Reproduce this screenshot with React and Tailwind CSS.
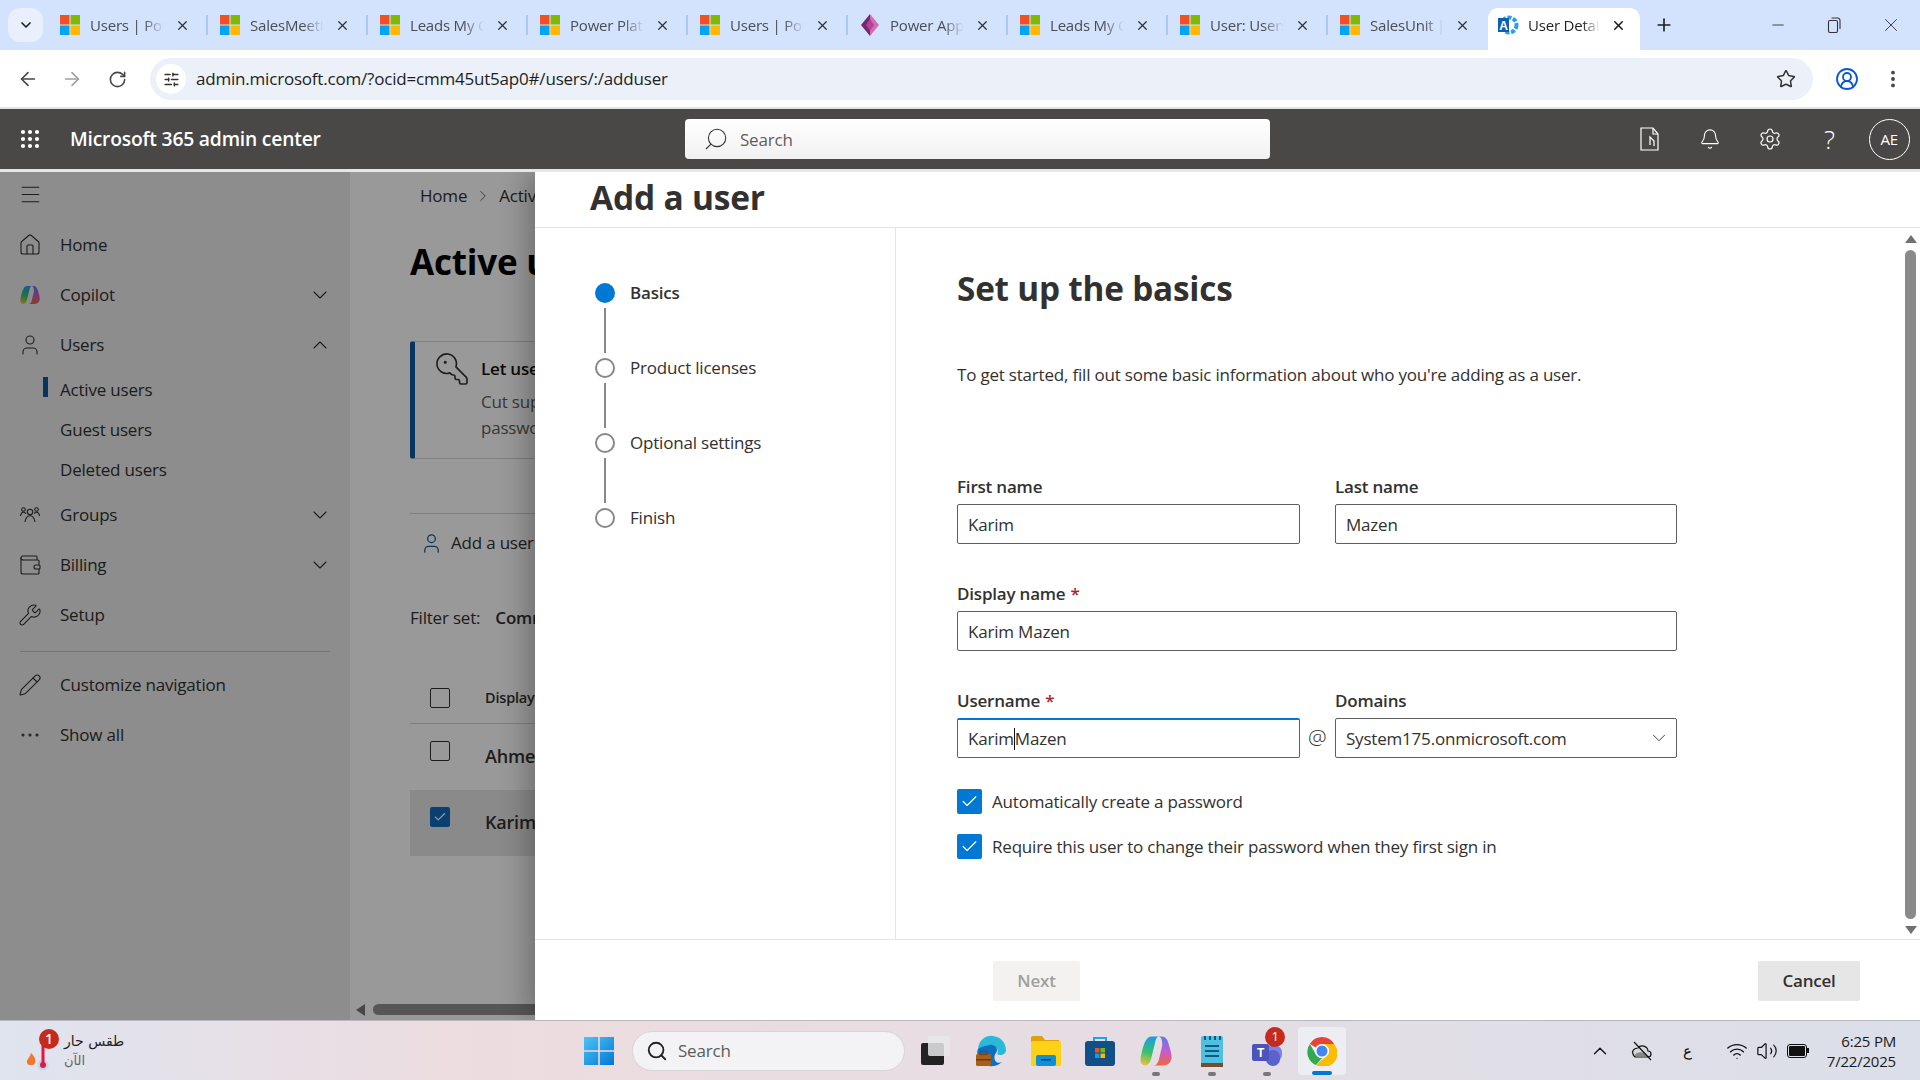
import React from 'react';
import { ChevronDown, ChevronUp, ArrowLeft, ArrowRight, RotateCw, Star, CircleUserRound, EllipsisVertical, Plus, X, Minus, Search, Bell, Settings, House, User, Wallet, Wrench, Pencil, Ellipsis, Check, Wifi, Volume2, SlidersHorizontal, ChevronRight, Menu, Grip, KeyRound } from 'lucide-react';

const MsLogo = () => (
  <svg width="20" height="20" viewBox="0 0 20 20" className="shrink-0">
    <rect x="0" y="0" width="9.5" height="9.5" fill="#f25022" />
    <rect x="10.5" y="0" width="9.5" height="9.5" fill="#7fba00" />
    <rect x="0" y="10.5" width="9.5" height="9.5" fill="#00a4ef" />
    <rect x="10.5" y="10.5" width="9.5" height="9.5" fill="#ffb900" />
  </svg>
);
const PowerApps = () => (
  <svg width="20" height="24" viewBox="0 0 20 24" className="shrink-0">
    <path d="M10 1 L19 12 L10 23 Z" fill="#d56cb1" />
    <path d="M10 1 L1 12 L10 23 Z" fill="#742774" />
    <path d="M10 6 L14 12 L10 18 L6 12 Z" fill="#b4419a" />
  </svg>
);
const AzureGear = () => (
  <svg width="22" height="22" viewBox="0 0 22 22" className="shrink-0">
    <circle cx="12" cy="11" r="7.5" fill="none" stroke="#2aa0e6" strokeWidth="4" strokeDasharray="4 1.6" />
    <path d="M1 4 H12 V18 H1 Z" fill="#0f5fb0" />
    <text x="6.5" y="15.5" fontSize="12" fontWeight="700" fill="#fff" textAnchor="middle" fontFamily="Liberation Sans">A</text>
  </svg>
);

const tabs = [
  ['Users | Power', 'ms'], ['SalesMeeting', 'ms'], ['Leads My Op', 'ms'], ['Power Platfo', 'ms'], ['Users | Power', 'ms'],
  ['Power Apps', 'pa'], ['Leads My Op', 'ms'], ['User: Users', 'ms'], ['SalesUnit | D', 'ms'],
];

function Tab({ title, icon, last }) {
  return (
    <div className="relative flex h-[42px] w-[160px] shrink-0 items-center pb-[8px] pl-[12px]">
      {icon === 'ms' ? <MsLogo /> : <PowerApps />}
      <span className="ml-[10px] w-[74px] overflow-hidden whitespace-nowrap text-[15px] text-[#4a4d52] [mask-image:linear-gradient(to_right,#000_72%,transparent)]">{title}</span>
      <X size={15} strokeWidth={2} className="ml-[11px] text-[#2f3237]" />
      <div className={last ? 'hidden' : 'absolute right-0 top-[7px] h-[20px] w-[2px] bg-[#a8c7fa]'} />
    </div>
  );
}

function TabStrip() {
  return (
    <div className="flex h-[50px] shrink-0 items-end bg-[#d3e3fd]">
      <div className="mb-[8px] ml-[8px] mr-[5px] flex h-[34px] w-[35px] shrink-0 items-center justify-center rounded-[12px] bg-[#e9f0fc]">
        <ChevronDown size={16} strokeWidth={2.5} className="text-[#1f1f1f]" />
      </div>
      {tabs.map((t, i) => <Tab key={i} title={t[0]} icon={t[1]} last={i === 8} />)}
      <div className="flex h-[42px] w-[152px] shrink-0 items-center rounded-t-[10px] bg-white pb-[8px] pl-[9px]">
        <AzureGear />
        <span className="ml-[9px] w-[72px] overflow-hidden whitespace-nowrap text-[15px] text-[#1f1f1f] [mask-image:linear-gradient(to_right,#000_75%,transparent)]">User Details</span>
        <X size={15} strokeWidth={2.5} className="ml-[11px] text-[#1f1f1f]" />
      </div>
      <div className="flex h-[42px] w-[48px] shrink-0 items-center justify-center pb-[8px]">
        <Plus size={20} strokeWidth={2} className="text-[#1f1f1f]" />
      </div>
      <div className="ml-auto flex h-[50px] items-center text-[#333]">
        <div className="flex w-[56px] justify-center"><Minus size={18} strokeWidth={1.2} /></div>
        <div className="flex w-[56px] justify-center">
          <svg width="14" height="16" viewBox="0 0 14 16" fill="none" stroke="#333" strokeWidth="1.1"><rect x="1.5" y="3.5" width="9" height="12" rx="1.5" /><path d="M4.5 1 H10.5 A2.5 2.5 0 0 1 13 3.5 V12" /></svg>
        </div>
        <div className="flex w-[58px] justify-center"><X size={22} strokeWidth={1} /></div>
      </div>
    </div>
  );
}

function Toolbar() {
  return (
    <div className="flex h-[57px] shrink-0 items-center bg-white pt-[1px]">
      <div className="ml-[17px] flex w-[133px] items-center text-[#474747]">
        <ArrowLeft size={22} strokeWidth={1.8} />
        <ArrowRight size={22} strokeWidth={1.8} className="ml-[22px] text-[#a0a0a0]" />
        <RotateCw size={19} strokeWidth={2} className="ml-[25px]" />
      </div>
      <div className="flex h-[42px] w-[1663px] shrink-0 items-center rounded-full bg-[#ebf0f9] pl-[6px]">
        <div className="flex h-[30px] w-[30px] items-center justify-center rounded-full bg-white">
          <SlidersHorizontal size={17} strokeWidth={2} className="text-[#333]" />
        </div>
        <span className="ml-[10px] text-[17px] text-[#1f1f1f]">admin.microsoft.com/?ocid=cmm45ut5ap0#/users/:/adduser</span>
        <Star size={20} strokeWidth={1.8} className="ml-auto mr-[17px] text-[#333]" />
      </div>
      <CircleUserRound size={24} strokeWidth={1.8} className="ml-[22px] text-[#0b57d0]" />
      <EllipsisVertical size={22} strokeWidth={2.2} className="ml-[23px] text-[#474747]" />
    </div>
  );
}

function AdminHeader() {
  return (
    <>
      <div className="h-[2px] shrink-0 bg-[#e3e3e3]" />
      <div className="flex h-[60px] shrink-0 items-center bg-[#494846] text-white">
        <Grip size={24} strokeWidth={2.2} className="ml-[18px]" />
        <span className="ml-[28px] w-[615px] pt-[1px] text-[19.3px] font-semibold">Microsoft 365 admin center</span>
        <div className="flex h-[40px] w-[585px] items-center rounded-[4px] bg-gradient-to-b from-white to-[#f1f1f1] pl-[18px]">
          <Search size={26} strokeWidth={1} className="-scale-x-100 text-[#333]" />
          <span className="ml-[11px] pt-[1px] text-[17px] text-[#605e5c]">Search</span>
        </div>
        <svg width="22" height="26" viewBox="0 0 22 26" fill="none" stroke="#fff" strokeWidth="1.2" className="ml-[369px]">
          <path d="M2 2 H14 L19 8 V24 H2 Z" /><path d="M14 2 V8 H19" /><path d="M11 19 V11 L15 15 V20" />
        </svg>
        <Bell size={22} strokeWidth={1.2} className="ml-[38px]" />
        <Settings size={24} strokeWidth={1.2} className="ml-[37px]" />
        <span className="ml-[42px] text-[26px] font-light leading-none">?</span>
        <div className="ml-[34px] flex h-[41px] w-[41px] items-center justify-center rounded-full border border-white text-[15px]">AE</div>
      </div>
      <div className="h-[3px] shrink-0 bg-[#e6e6e6]" />
    </>
  );
}

const Copilot = ({ s = 20, id = 'n' }) => (
  <svg width={s} height={s} viewBox="0 0 20 20" className="shrink-0">
    <defs>
      <linearGradient id={'cpa' + id} x1="0.5" y1="0" x2="0.3" y2="1"><stop offset="0" stopColor="#1b9de2" /><stop offset="0.55" stopColor="#37c26c" /><stop offset="1" stopColor="#e8c13a" /></linearGradient>
      <linearGradient id={'cpb' + id} x1="0.5" y1="0" x2="0.5" y2="1"><stop offset="0" stopColor="#5a7be8" /><stop offset="0.5" stopColor="#c45bd0" /><stop offset="1" stopColor="#f0683b" /></linearGradient>
    </defs>
    <path d="M7 1 H12 C10.5 1 10 2.5 9.6 4 L7.4 13 C6.8 16.5 5.5 19 3 19 C0.5 19 -0.3 16 0.8 12 C2 7 3.5 1 7 1Z" fill={`url(#cpa${id})`} />
    <path d="M11.5 1 H13.5 C16 1 17.3 3 18 6 C19.5 11 20.5 14 19 16.5 C18 18.5 16 19 13 19 H8.5 C10.5 19 11.5 17 12 14.5 L13.8 7 C14.2 4 13.5 1 11.5 1Z" fill={`url(#cpb${id})`} />
  </svg>
);

function NavRow({ icon, label, chevron }) {
  return (
    <div className="flex h-[50px] shrink-0 items-center pl-[20px] pr-[18px] text-[17px] text-[#323130]">
      <span className="flex w-[20px] justify-center">{icon}</span>
      <span className="ml-[20px]">{label}</span>
      {chevron === 'down' && <ChevronDown size={24} strokeWidth={1.1} className="ml-auto" />}
      {chevron === 'up' && <ChevronUp size={24} strokeWidth={1.1} className="ml-auto" />}
    </div>
  );
}
function SubRow({ label, active }) {
  return (
    <div className="relative flex h-[40px] shrink-0 items-center pl-[60px] text-[17px] text-[#323130]">
      {active && <div className="absolute left-[43px] top-[7px] h-[20px] w-[5px] bg-[#0b5a9c]" />}
      {label}
    </div>
  );
}

const GroupsIcon = () => (
  <svg width="20" height="20" viewBox="0 0 20 20" fill="none" stroke="#323130" strokeWidth="1.1" className="shrink-0">
    <circle cx="10" cy="7" r="2.7" /><path d="M5 17 Q6 11 10 10.5 Q14 11 15 17" /><circle cx="3.5" cy="4.5" r="1.8" /><circle cx="16.5" cy="4.5" r="1.8" /><path d="M0.5 11 Q1 7.5 3.5 7 L6 8.5" /><path d="M19.5 11 Q19 7.5 16.5 7 L14 8.5" />
  </svg>
);

function SideNav() {
  const ic = { size: 24, strokeWidth: 1.1, className: 'shrink-0' };
  return (
    <nav className="flex w-[350px] shrink-0 flex-col bg-[#ebebeb]">
      <div className="h-[48px] shrink-0 pl-[18px] pt-[10px] text-[#323130]"><Menu size={25} strokeWidth={1} /></div>
      <NavRow icon={<House {...ic} />} label="Home" />
      <NavRow icon={<Copilot />} label="Copilot" chevron="down" />
      <NavRow icon={<User {...ic} />} label="Users" chevron="up" />
      <SubRow label="Active users" active />
      <SubRow label="Guest users" />
      <SubRow label="Deleted users" />
      <NavRow icon={<GroupsIcon />} label="Groups" chevron="down" />
      <NavRow icon={<Wallet {...ic} />} label="Billing" chevron="down" />
      <NavRow icon={<Wrench {...ic} />} label="Setup" />
      <div className="ml-[20px] mr-[20px] mt-[11px] h-px bg-[#c4c4c4] mb-[8px]" />
      <NavRow icon={<Pencil {...ic} />} label="Customize navigation" />
      <NavRow icon={<Ellipsis {...ic} />} label="Show all" />
    </nav>
  );
}

function PageBox({ checked }) {
  return checked ? (
    <div className="flex h-[20px] w-[20px] shrink-0 items-center justify-center rounded-[2px] bg-[#0f6cbd] text-white"><Check size={14} strokeWidth={2} /></div>
  ) : <div className="h-[20px] w-[20px] shrink-0 rounded-[2px] border border-[#323130]" />;
}

function PageBehind() {
  return (
    <main className="flex w-[185px] shrink-0 flex-col overflow-hidden bg-white">
      <div className="flex h-[48px] shrink-0 items-center whitespace-nowrap pl-[70px] text-[17px] text-[#323130]">
        Home <ChevronRight size={18} strokeWidth={1} className="mx-[7px] shrink-0" /> Active users
      </div>
      <h1 className="ml-[60px] mt-[15px] h-[54px] whitespace-nowrap text-[35px] font-bold leading-[54px] text-black">Active users</h1>
      <div className="ml-[60px] mt-[52px] flex h-[118px] w-[800px] shrink-0 rounded-[3px] border border-l-[5px] border-[#d5d5d5] border-l-[#0b5a9c]">
        <KeyRound size={36} strokeWidth={1.1} className="ml-[19px] mt-[9px] -scale-x-100 text-[#323130]" />
        <div className="ml-[11px] mt-[14px] text-[17px] leading-[26px]">
          <div className="font-semibold text-[#111]">Let users reset their passwords</div>
          <div className="mt-[7px] text-[#605e5c]">Cut support costs and let users reset their</div>
          <div className="text-[#605e5c]">passwords</div>
        </div>
      </div>
      <div className="ml-[60px] mt-[54px] h-px w-[800px] shrink-0 bg-[#d5d5d5]" />
      <div className="ml-[70px] flex h-[58px] shrink-0 items-center whitespace-nowrap text-[17px] text-[#323130]">
        <User size={23} strokeWidth={1.3} className="shrink-0 text-[#0b5a9c]" />
        <span className="ml-[8px]">Add a user</span>
      </div>
      <div className="ml-[60px] mt-[27px] flex h-[38px] shrink-0 items-center whitespace-nowrap text-[17px] text-[#323130]">
        Filter set:<span className="ml-[15px] font-semibold">Community</span>
      </div>
      <div className="ml-[60px] mt-[39px] flex h-[48px] w-[800px] shrink-0 items-center whitespace-nowrap border-b border-[#d5d5d5] pb-[4px] pl-[20px]">
        <PageBox /><span className="ml-[35px] text-[14.5px] font-semibold text-[#323130]">Display name</span>
      </div>
      <div className="ml-[60px] flex h-[66px] w-[800px] shrink-0 whitespace-nowrap pl-[20px] pt-[17px]">
        <PageBox /><span className="ml-[35px] mt-[2px] text-[18px] font-semibold text-[#323130]">Ahmed</span>
      </div>
      <div className="ml-[60px] flex h-[66px] w-[800px] shrink-0 whitespace-nowrap bg-[#e6e6e6] pl-[20px] pt-[17px]">
        <PageBox checked /><span className="ml-[35px] mt-[2px] text-[18px] font-semibold text-[#323130]">Karim</span>
      </div>
      <div className="ml-[6px] mt-auto mb-[5px] flex h-[11px] shrink-0 items-center">
        <div className="h-0 w-0 border-y-[6px] border-r-[9px] border-y-transparent border-r-[#777]" />
        <div className="ml-[8px] h-[11px] w-[400px] shrink-0 rounded-full bg-[#8f8f8f]" />
      </div>
    </main>
  );
}

function Field({ label, req, children }) {
  return (
    <div>
      <div className="flex h-[30px] items-start text-[17px] font-semibold leading-[26px] text-[#323130]">
        {label}{req && <span className="ml-[5px] text-[#a4262c]">*</span>}
      </div>
      {children}
    </div>
  );
}
function TextBox({ value, focused }) {
  return (
    <div className={focused
      ? 'flex h-[40px] items-center rounded-[2px] border border-t-2 border-[#0078d4] pl-[10px] text-[17px] text-[#323130]'
      : 'flex h-[40px] items-center rounded-[2px] border border-[#605e5c] pl-[10px] pt-[2px] text-[17px] text-[#323130]'}>
      {value}
    </div>
  );
}
function CheckRow({ label }) {
  return (
    <div className="flex h-[25px] items-center">
      <div className="flex h-[25px] w-[25px] shrink-0 items-center justify-center rounded-[2px] bg-[#0078d4] text-white"><Check size={19} strokeWidth={1.5} /></div>
      <span className="ml-[10px] text-[17px] text-[#323130]">{label}</span>
    </div>
  );
}

function Step({ label, active, last }) {
  return (
    <div className="flex h-[75px] shrink-0">
      <div className="flex w-[20px] flex-col items-center">
        {active
          ? <div className="h-[20px] w-[20px] shrink-0 rounded-full bg-[#0078d4]" />
          : <div className="h-[20px] w-[20px] shrink-0 rounded-full border-2 border-[#8a8886]" />}
        {!last && <div className="mt-[5px] h-[45px] w-[2px] bg-[#8a8886]" />}
      </div>
      <span className={active ? 'ml-[15px] text-[17px] font-semibold leading-[19px] text-[#323130]' : 'ml-[15px] text-[17px] leading-[19px] text-[#323130]'}>{label}</span>
    </div>
  );
}

function Drawer() {
  return (
    <section className="absolute bottom-0 left-[535px] right-0 top-0 flex flex-col bg-white shadow-[-6px_0_28px_rgba(0,0,0,0.3)]">
      <header className="flex h-[56px] shrink-0 items-start border-b border-[#e5e5e5] pl-[55px]">
        <h2 className="text-[33.5px] font-bold leading-[50px] text-[#323130]">Add a user</h2>
      </header>
      <div className="flex min-h-0 flex-1">
        <div className="w-[361px] shrink-0 border-r border-[#e5e5e5] pl-[60px] pt-[55px]">
          <Step label="Basics" active />
          <Step label="Product licenses" />
          <Step label="Optional settings" />
          <Step label="Finish" last />
        </div>
        <div className="ml-[61px] w-[720px] shrink-0">
          <h3 className="mt-[36px] h-[48px] text-[33.3px] font-bold leading-[48px] text-[#323130]">Set up the basics</h3>
          <p className="mt-[48px] h-[30px] text-[17px] leading-[30px] text-[#323130]">To get started, fill out some basic information about who you're adding as a user.</p>
          <div className="mt-[84px] grid grid-cols-[343px_342px] gap-x-[35px]">
            <Field label="First name"><TextBox value="Karim" /></Field>
            <Field label="Last name"><TextBox value="Mazen" /></Field>
          </div>
          <div className="mt-[37px]">
            <Field label="Display name" req><TextBox value="Karim Mazen" /></Field>
          </div>
          <div className="mt-[37px] grid grid-cols-[343px_342px] gap-x-[35px]">
            <Field label="Username" req>
              <div className="relative">
                <TextBox focused value={<><span>Karim</span><span className="h-[22px] w-px bg-[#111]" /><span>Mazen</span></>} />
                <span className="absolute left-[351px] top-[6px] text-[21px] font-light leading-[26px] text-[#323130]">@</span>
              </div>
            </Field>
            <Field label="Domains">
              <div className="flex h-[40px] items-center rounded-[2px] border border-[#605e5c] pl-[10px] pr-[6px] text-[17px] text-[#323130]">
                <span className="pt-[1px]">System175.onmicrosoft.com</span>
                <ChevronDown size={22} strokeWidth={1} className="ml-auto" />
              </div>
            </Field>
          </div>
          <div className="mt-[31px] flex flex-col gap-[20px]">
            <CheckRow label="Automatically create a password" />
            <CheckRow label="Require this user to change their password when they first sign in" />
          </div>
        </div>
        <div className="ml-auto flex w-[20px] shrink-0 flex-col items-center pb-[5px] pl-[1px] pt-[7px]">
          <div className="h-0 w-0 border-x-[6px] border-b-[8px] border-x-transparent border-b-[#707070]" />
          <div className="my-[7px] w-[11px] flex-1 rounded-full bg-[#8a8a8a]" />
          <div className="h-0 w-0 border-x-[6px] border-t-[8px] border-x-transparent border-t-[#707070]" />
        </div>
      </div>
      <footer className="flex h-[81px] shrink-0 items-center border-t border-[#e5e5e5] pt-[2px]">
        <button className="ml-[458px] h-[40px] w-[87px] rounded-[2px] bg-[#f3f2f1] text-[17px] font-semibold text-[#a19f9d]">Next</button>
        <button className="ml-auto mr-[60px] h-[40px] w-[102px] rounded-[2px] bg-[#e6e6e6] text-[17px] font-semibold text-[#323130]">Cancel</button>
      </footer>
    </section>
  );
}

const Edge = () => (
  <svg width="32" height="32" viewBox="0 0 32 32"><path d="M3 14 C4 4 12 0 18 1 C27 2 31 9 31 15 C31 20 25 21 22 19 C25 15 20 9 14 10 C8 11 3 15 3 14Z" fill="#2bb9d9" /><path d="M14 10 C20 9 24 14 21 18 C17 23 21 30 27 27 C22 32 12 33 7 28 C3 24 1 18 3 14 C5 12 9 11 14 10Z" fill="#0c6fc4" /><rect x="1" y="19" width="15" height="12" rx="1.5" fill="#a65f1c" /><rect x="5" y="16.5" width="7" height="3" fill="none" stroke="#7a4210" strokeWidth="1.2" /><rect x="1" y="24" width="15" height="1.5" fill="#6d3a0c" /></svg>
);
const Explorer = () => (
  <svg width="32" height="30" viewBox="0 0 32 30"><path d="M1 2 Q1 0 3 0 H12 L15 4 H29 V8 H1Z" fill="#e0a007" /><rect x="1" y="5" width="30" height="25" rx="1.5" fill="#fcd116" /><rect x="6" y="19" width="20" height="11" rx="2" fill="#0f8fd8" /><rect x="11" y="23" width="10" height="1.5" fill="#063a66" /></svg>
);
const Store = () => (
  <svg width="30" height="30" viewBox="0 0 30 30"><path d="M9 6 V2 H21 V6" fill="none" stroke="#1aa5e8" strokeWidth="2" /><rect x="0" y="5" width="30" height="25" rx="3" fill="#134f87" /><rect x="10" y="12" width="4.5" height="4.5" fill="#f25022" /><rect x="15.5" y="12" width="4.5" height="4.5" fill="#7fba00" /><rect x="10" y="17.5" width="4.5" height="4.5" fill="#00a4ef" /><rect x="15.5" y="17.5" width="4.5" height="4.5" fill="#ffb900" /></svg>
);
const Notepad = () => (
  <svg width="24" height="32" viewBox="0 0 24 32"><rect x="1" y="1" width="22" height="28" rx="1.5" fill="#4fc0e0" /><rect x="1" y="28" width="22" height="4" fill="#7a4a2a" /><path d="M5 11 H19 M5 16 H19 M5 21 H19" stroke="#0c5a85" strokeWidth="2" /><path d="M5 1 V5 M10 1 V5 M15 1 V5 M20 1 V5" stroke="#0c5a85" strokeWidth="2" /></svg>
);
const Teams = () => (
  <svg width="30" height="30" viewBox="0 0 30 30"><circle cx="22" cy="8" r="5" fill="#7b83eb" /><rect x="10" y="10" width="20" height="15" rx="6" fill="#7b83eb" /><rect x="14" y="14" width="14" height="16" rx="7" fill="#5b62c9" /><rect x="0" y="8" width="17" height="17" rx="2" fill="#4b53bc" /><text x="8.5" y="21" fontSize="12" fontWeight="700" fill="#fff" textAnchor="middle" fontFamily="Liberation Sans">T</text></svg>
);
const Chrome = () => (
  <svg width="30" height="30" viewBox="0 0 30 30">
    <path d="M15 1 A14 14 0 0 1 27.1 8 L15 8 A7 7 0 0 0 8.9 11.5 L2.9 8 A14 14 0 0 1 15 1Z" fill="#ea4335" />
    <path d="M2.9 8 L8.9 18.5 A7 7 0 0 0 15 22 L9 29 A14 14 0 0 1 2.9 8Z" fill="#34a853" />
    <path d="M27.1 8 A14 14 0 0 1 9 29 L21 18.5 A7 7 0 0 0 21 11.5 L15 8Z" fill="#fbbc05" />
    <circle cx="15" cy="15" r="7" fill="#fff" /><circle cx="15" cy="15" r="5.5" fill="#4285f4" />
  </svg>
);
const TaskView = () => (
  <svg width="30" height="30" viewBox="0 0 30 30"><rect x="0" y="7" width="23" height="22" rx="2" fill="#222" /><rect x="7" y="0" width="22" height="20" rx="2" fill="#e8e8ea" fillOpacity=".85" /></svg>
);
const WinLogo = () => (
  <svg width="30" height="30" viewBox="0 0 30 30"><defs><linearGradient id="wl" x1="0" y1="0" x2="1" y2="1"><stop offset="0" stopColor="#4fc3f7" /><stop offset="1" stopColor="#0078d4" /></linearGradient></defs><path d="M0 1 H14.2 V14.2 H0Z M15.8 1 H30 V14.2 H15.8Z M0 15.8 H14.2 V29 H0Z M15.8 15.8 H30 V29 H15.8Z" fill="url(#wl)" /></svg>
);
const Weather = () => (
  <svg width="26" height="34" viewBox="0 0 26 34">
    <path d="M5 16 C8 19 10 21 9 26 C8 29 2 29 1 26 C0 22 4 21 5 16Z" fill="#f2772a" />
    <circle cx="17" cy="28" r="5.5" fill="#bcd9f5" />
    <rect x="15.5" y="8" width="3" height="18" fill="#e5173f" />
    <circle cx="17" cy="28" r="3" fill="#e5173f" />
  </svg>
);
const CloudMuted = () => (
  <svg width="22" height="20" viewBox="0 0 22 20" className="shrink-0" fill="none" stroke="#111" strokeWidth="1.2">
    <path d="M5 16 H17 C21 16 21 10 17 10 C16.5 5 10 3 7 7 C3 7 0.5 10 2 13 C2.6 15 4 16 5 16Z" fill="#d8d9df" />
    <path d="M3 14.5 C7 10 13 10 17 15.5 H5Z" fill="#888" stroke="none" />
    <path d="M3 1 L20 19" />
  </svg>
);

function Taskbar() {
  return (
    <footer className="flex h-[60px] shrink-0 items-center border-t border-[#b9b9bd] bg-gradient-to-r from-[#dfe4ef] via-[#eddcdf] via-25% to-[#dbdfe9]">
      <div className="relative ml-[26px] flex h-[40px] w-[38px] shrink-0 items-end">
        <Weather />
        <div className="absolute -top-[2px] left-[13px] flex h-[20px] w-[20px] items-center justify-center rounded-full bg-[#c42b1c] text-[14px] font-semibold text-white">1</div>
      </div>
      <div className="flex w-[74px] shrink-0 flex-col items-start font-['DejaVu_Sans','Noto_Sans',sans-serif] leading-[20px]">
        <span className="whitespace-nowrap text-[14px] text-[#222]">طقس حار</span>
        <span className="text-[13px] text-[#666]">الآن</span>
      </div>
      <div className="ml-[446px]"><WinLogo /></div>
      <div className="ml-[18px] flex h-[40px] w-[273px] items-center rounded-full border border-[#d5d5da] bg-[#f3f3f6] pl-[13px]">
        <Search size={22} strokeWidth={2} className="text-[#222]" />
        <span className="ml-[10px] text-[17px] text-[#5c5c5c]">Search</span>
      </div>
      <div className="ml-[16px]"><TaskView /></div>
      <div className="ml-[24px]"><Edge /></div>
      <div className="ml-[23px]"><Explorer /></div>
      <div className="ml-[23px]"><Store /></div>
      <div className="relative ml-[25px] flex h-[48px] w-[32px] items-center justify-center">
        <Copilot s={32} id="t" />
        <div className="absolute -bottom-[1px] left-[12px] h-[4px] w-[8px] rounded-full bg-[#777]" />
      </div>
      <div className="relative ml-[28px] flex h-[48px] w-[24px] items-center justify-center">
        <Notepad />
        <div className="absolute -bottom-[1px] left-[8px] h-[4px] w-[8px] rounded-full bg-[#777]" />
      </div>
      <div className="relative ml-[27px] flex h-[48px] w-[32px] items-center justify-center">
        <Teams />
        <div className="absolute -bottom-[1px] left-[12px] h-[4px] w-[8px] rounded-full bg-[#777]" />
        <div className="absolute left-[14px] top-[0px] flex h-[20px] w-[20px] items-center justify-center rounded-full bg-[#c42b1c] text-[13px] text-white">1</div>
      </div>
      <div className="relative ml-[15px] flex h-[48px] w-[48px] items-center justify-center rounded-[4px] bg-[#eceef3]">
        <Chrome />
        <div className="absolute bottom-[0px] left-[14px] h-[4px] w-[20px] rounded-full bg-[#0078d4]" />
      </div>
      <div className="ml-auto flex items-center text-[#111]">
        <ChevronUp size={22} strokeWidth={1.5} />
        <span className="ml-[20px]"><CloudMuted /></span>
        <span className="ml-[30px] text-[15px]">ع</span>
        <Wifi size={22} strokeWidth={1.5} className="ml-[34px]" />
        <Volume2 size={22} strokeWidth={1.3} className="ml-[8px]" />
        <div className="ml-[9px] flex h-[14px] w-[20px] items-stretch rounded-[3px] border border-[#111] p-[1px]"><div className="w-full rounded-[1px] bg-[#111]" /></div>
        <div className="h-[5px] w-[2px] bg-[#111]" />
        <div className="ml-[18px] mr-[24px] flex flex-col items-end text-[15px] leading-[20px] text-[#1a1a1a]">
          <span>6:25 PM</span>
          <span>7/22/2025</span>
        </div>
      </div>
    </footer>
  );
}

export default function App() {
  return (
    <div className="flex h-screen w-screen flex-col overflow-hidden bg-white font-['Open_Sans','Noto_Sans',sans-serif] tracking-[-0.2px]">
      <TabStrip />
      <Toolbar />
      <AdminHeader />
      <div className="relative flex min-h-0 flex-1 overflow-hidden">
        <SideNav />
        <PageBehind />
        <div className="absolute inset-0 bg-black/40" />
        <Drawer />
      </div>
      <Taskbar />
    </div>
  );
}
